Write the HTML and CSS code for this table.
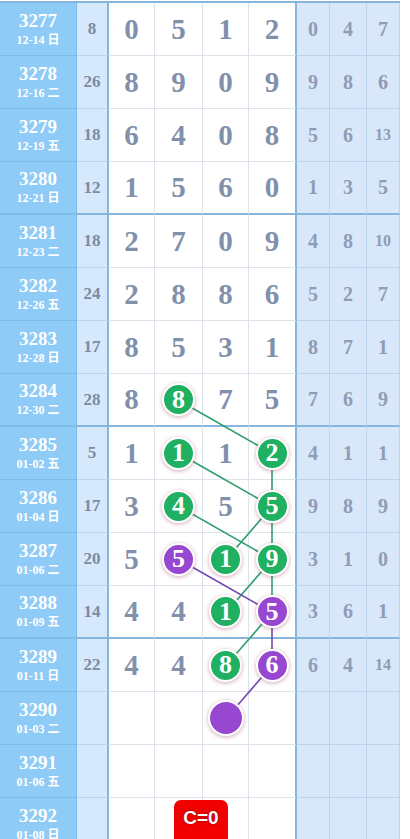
FILE: index.html
```html
<!DOCTYPE html>
<html lang="zh">
<head>
  <meta charset="UTF-8">
  <meta name="viewport" content="width=device-width, initial-scale=1.0">
  <title>走势图</title>
  <link rel="stylesheet" href="styles.css">
</head>
<body>
  <div class="board">
    <div class="row">
      <div class="issue"><b>3277</b><span>12-14 日</span></div>
      <div class="sum">8</div>
      <div class="d">0</div><div class="d">5</div><div class="d">1</div><div class="d end">2</div>
      <div class="r">0</div><div class="r">4</div><div class="r">7</div>
    </div>
    <div class="row">
      <div class="issue"><b>3278</b><span>12-16 二</span></div>
      <div class="sum">26</div>
      <div class="d">8</div><div class="d">9</div><div class="d">0</div><div class="d end">9</div>
      <div class="r">9</div><div class="r">8</div><div class="r">6</div>
    </div>
    <div class="row">
      <div class="issue"><b>3279</b><span>12-19 五</span></div>
      <div class="sum">18</div>
      <div class="d">6</div><div class="d">4</div><div class="d">0</div><div class="d end">8</div>
      <div class="r">5</div><div class="r">6</div><div class="r small">13</div>
    </div>
    <div class="row group-end">
      <div class="issue"><b>3280</b><span>12-21 日</span></div>
      <div class="sum">12</div>
      <div class="d">1</div><div class="d">5</div><div class="d">6</div><div class="d end">0</div>
      <div class="r">1</div><div class="r">3</div><div class="r">5</div>
    </div>

    <div class="row">
      <div class="issue"><b>3281</b><span>12-23 二</span></div>
      <div class="sum">18</div>
      <div class="d">2</div><div class="d">7</div><div class="d">0</div><div class="d end">9</div>
      <div class="r">4</div><div class="r">8</div><div class="r small">10</div>
    </div>
    <div class="row">
      <div class="issue"><b>3282</b><span>12-26 五</span></div>
      <div class="sum">24</div>
      <div class="d">2</div><div class="d">8</div><div class="d">8</div><div class="d end">6</div>
      <div class="r">5</div><div class="r">2</div><div class="r">7</div>
    </div>
    <div class="row">
      <div class="issue"><b>3283</b><span>12-28 日</span></div>
      <div class="sum">17</div>
      <div class="d">8</div><div class="d">5</div><div class="d">3</div><div class="d end">1</div>
      <div class="r">8</div><div class="r">7</div><div class="r">1</div>
    </div>
    <div class="row group-end">
      <div class="issue"><b>3284</b><span>12-30 二</span></div>
      <div class="sum">28</div>
      <div class="d">8</div><div class="d"><i class="ball green">8</i></div><div class="d">7</div><div class="d end">5</div>
      <div class="r">7</div><div class="r">6</div><div class="r">9</div>
    </div>

    <div class="row">
      <div class="issue"><b>3285</b><span>01-02 五</span></div>
      <div class="sum">5</div>
      <div class="d">1</div><div class="d"><i class="ball green">1</i></div><div class="d">1</div><div class="d end"><i class="ball green">2</i></div>
      <div class="r">4</div><div class="r">1</div><div class="r">1</div>
    </div>
    <div class="row">
      <div class="issue"><b>3286</b><span>01-04 日</span></div>
      <div class="sum">17</div>
      <div class="d">3</div><div class="d"><i class="ball green">4</i></div><div class="d">5</div><div class="d end"><i class="ball green">5</i></div>
      <div class="r">9</div><div class="r">8</div><div class="r">9</div>
    </div>
    <div class="row">
      <div class="issue"><b>3287</b><span>01-06 二</span></div>
      <div class="sum">20</div>
      <div class="d">5</div><div class="d"><i class="ball purple">5</i></div><div class="d"><i class="ball green">1</i></div><div class="d end"><i class="ball green">9</i></div>
      <div class="r">3</div><div class="r">1</div><div class="r">0</div>
    </div>
    <div class="row group-end">
      <div class="issue"><b>3288</b><span>01-09 五</span></div>
      <div class="sum">14</div>
      <div class="d">4</div><div class="d">4</div><div class="d"><i class="ball green">1</i></div><div class="d end"><i class="ball purple">5</i></div>
      <div class="r">3</div><div class="r">6</div><div class="r">1</div>
    </div>

    <div class="row">
      <div class="issue"><b>3289</b><span>01-11 日</span></div>
      <div class="sum">22</div>
      <div class="d">4</div><div class="d">4</div><div class="d"><i class="ball green">8</i></div><div class="d end"><i class="ball purple">6</i></div>
      <div class="r">6</div><div class="r">4</div><div class="r small">14</div>
    </div>
    <div class="row">
      <div class="issue"><b>3290</b><span>01-03 二</span></div>
      <div class="sum"></div>
      <div class="d"></div><div class="d"></div><div class="d"><i class="ball purple big"></i></div><div class="d end"></div>
      <div class="r"></div><div class="r"></div><div class="r"></div>
    </div>
    <div class="row">
      <div class="issue"><b>3291</b><span>01-06 五</span></div>
      <div class="sum"></div>
      <div class="d"></div><div class="d"></div><div class="d"></div><div class="d end"></div>
      <div class="r"></div><div class="r"></div><div class="r"></div>
    </div>
    <div class="row last">
      <div class="issue"><b>3292</b><span>01-08 日</span></div>
      <div class="sum"></div>
      <div class="d"></div><div class="d"></div><div class="d"></div><div class="d end"></div>
      <div class="r"></div><div class="r"></div><div class="r"></div>
      <div class="badge">C=0</div>
    </div>

    <svg class="links" width="400" height="850" viewBox="0 0 400 850">
      <g stroke="#2e9e6c" stroke-width="1.6" fill="none">
        <line x1="179" y1="397.5" x2="272" y2="450.5"/>
        <line x1="179" y1="450.5" x2="272" y2="503.5"/>
        <line x1="272" y1="450.5" x2="272" y2="503.5"/>
        <line x1="179" y1="503.5" x2="272" y2="556.5"/>
        <line x1="272" y1="503.5" x2="226" y2="556.5"/>
        <line x1="272" y1="503.5" x2="272" y2="556.5"/>
        <line x1="272" y1="556.5" x2="226" y2="609.5"/>
        <line x1="272" y1="556.5" x2="272" y2="609.5"/>
        <line x1="272" y1="609.5" x2="226" y2="662.5"/>
      </g>
      <g stroke="#7348b0" stroke-width="1.6" fill="none">
        <line x1="179" y1="556.5" x2="272" y2="609.5"/>
        <line x1="272" y1="609.5" x2="272" y2="662.5"/>
        <line x1="272" y1="662.5" x2="226" y2="715.5"/>
      </g>
    </svg>
  </div>
</body>
</html>
```

FILE: styles.css
```css
body {
  margin: 0;
  background: #fff;
  font-family: 'Liberation Serif', 'Noto Sans CJK SC', serif;
}
.board {
  position: relative;
  width: 400px;
  margin-top: 1px;
  border-top: 2px solid #86b6dc;
}
.row {
  position: relative;
  display: grid;
  grid-template-columns: 77px 32px 46px 48px 46px 48px 33px 37px 33px;
  height: 53px;
  box-sizing: border-box;
}
.row > div {
  box-sizing: border-box;
  display: flex;
  align-items: center;
  justify-content: center;
  border-bottom: 1px solid #dde3ec;
  border-right: 1px solid #dde3ec;
}
.row.group-end > div {
  border-bottom: 2px solid #86b6dc;
}
.issue {
  flex-direction: column;
  background: #8ecbf6;
  color: #fff;
  font-weight: bold;
  border-color: #7dbbe8 !important;
}
.issue b {
  font-size: 19px;
  line-height: 20px;
}
.issue span {
  font-size: 12px;
  line-height: 16px;
  margin-top: 1px;
}
.sum {
  background: #d6e8fb;
  color: #7d8aa6;
  font-size: 17px;
  font-weight: bold;
  border-right: 2px solid #86b6dc !important;
  border-bottom-color: #bcd5ee !important;
}
.d {
  color: #8190ab;
  font-size: 29px;
  font-weight: bold;
}
.d.end {
  border-right: 2px solid #86b6dc !important;
}
.r {
  background: #d8e8fa;
  color: #8f9cb5;
  font-size: 20px;
  font-weight: bold;
  border-color: #bcd5ee !important;
}
.row.group-end .r, .row.group-end .sum {
  border-bottom-color: #86b6dc !important;
}
.r.small {
  font-size: 16px;
}
.ball {
  position: relative;
  z-index: 2;
  display: flex;
  align-items: center;
  justify-content: center;
  width: 29px;
  height: 29px;
  border: 2px solid #fff;
  border-radius: 50%;
  color: #fff;
  font-style: normal;
  font-size: 26px;
  font-weight: bold;
  box-shadow: 0 1px 4px rgba(150, 60, 90, 0.45);
}
.ball.green {
  background: #20b062;
}
.ball.purple {
  background: #9847d0;
}
.ball.big {
  width: 32px;
  height: 32px;
}
.links {
  position: absolute;
  top: 0;
  left: 0;
  z-index: 1;
  pointer-events: none;
}
.badge {
  position: absolute;
  left: 174px;
  top: 2px;
  width: 54px;
  height: 48px;
  background: #f20000;
  border-radius: 7px;
  color: #fff;
  font-family: 'Liberation Sans', sans-serif;
  font-size: 19px;
  font-weight: bold;
  padding-bottom: 12px;
  border: none !important;
  z-index: 3;
  text-shadow: 0 0 2px #600;
}
```
